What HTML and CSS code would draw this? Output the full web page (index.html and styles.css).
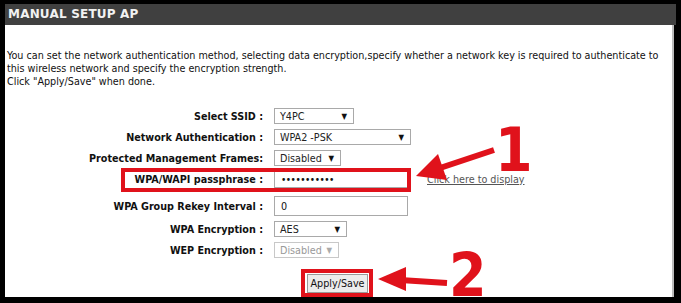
FILE: index.html
```html
<!DOCTYPE html>
<html lang="en">
<head>
  <meta charset="UTF-8" />
  <title>Manual Setup AP</title>
  <link rel="stylesheet" href="styles.css">
</head>
<body>
  <div class="frame">
    <div class="header">MANUAL SETUP AP</div>
    <div class="content">
      <p class="intro">You can set the network authentication method, selecting data encryption,specify whether a network key is required to authenticate to this wireless network and specify the encryption strength.<br>Click "Apply/Save" when done.</p>

      <div class="form">
        <div class="row">
          <label>Select SSID :</label>
          <div class="select w-ssid"><span>Y4PC</span><span class="caret">&#9660;</span></div>
        </div>
        <div class="row">
          <label>Network Authentication :</label>
          <div class="select w-auth"><span>WPA2 -PSK</span><span class="caret">&#9660;</span></div>
        </div>
        <div class="row">
          <label>Protected Management Frames:</label>
          <div class="select w-pmf"><span>Disabled</span><span class="caret">&#9660;</span></div>
        </div>
        <div class="row">
          <label>WPA/WAPI passphrase :</label>
          <div class="input pass">&#8226;&#8226;&#8226;&#8226;&#8226;&#8226;&#8226;&#8226;&#8226;&#8226;&#8226;</div>
          <a class="reveal" href="#">Click here to display</a>
        </div>
        <div class="row rekey">
          <label>WPA Group Rekey Interval :</label>
          <div class="input tall">0</div>
        </div>
        <div class="row">
          <label>WPA Encryption :</label>
          <div class="select w-enc"><span>AES</span><span class="caret">&#9660;</span></div>
        </div>
        <div class="row">
          <label>WEP Encryption :</label>
          <div class="select w-wep disabled"><span>Disabled</span><span class="caret">&#9660;</span></div>
        </div>
        <div class="actions">
          <button>Apply/Save</button>
        </div>
      </div>
    </div>

    <!-- annotations drawn over the screenshot -->
    <svg class="marks" width="681" height="303" viewBox="0 0 681 303">
      <rect x="123" y="170" width="286" height="20" fill="none" stroke="#e0121b" stroke-width="4"/>
      <rect x="303" y="271" width="68" height="24" fill="none" stroke="#e0121b" stroke-width="4"/>
      <path d="M494 150 L440 168" stroke="#e0121b" stroke-width="6" fill="none"/>
      <path d="M416 176 L438 154 L447 180 Z" fill="#e0121b"/>
      <path d="M447 283 L400 280" stroke="#e0121b" stroke-width="6" fill="none"/>
      <path d="M378 279 L406 267 L406 291 Z" fill="#e0121b"/>
      <text x="495" y="171" class="num">1</text>
      <text x="449" y="296" class="num">2</text>
    </svg>
  </div>
</body>
</html>
```

FILE: styles.css
```css
* {
  box-sizing: border-box;
}
html, body {
  margin: 0;
  padding: 0;
  background: #000;
  width: 681px;
  height: 303px;
  overflow: hidden;
}
.frame {
  position: relative;
  padding: 4px 5px 6px 5px;
  height: 303px;
  display: flex;
  flex-direction: column;
}
.header {
  height: 21px;
  width: 671px;
  background: #404040;
  color: #f2f2f2;
  font-family: 'DejaVu Sans', sans-serif;
  font-weight: bold;
  font-size: 12px;
  line-height: 21px;
  padding-left: 3px;
  letter-spacing: 0.2px;
}
.content {
  flex: 1;
  width: 669px;
  background: #fff;
  border-right: 2px solid #bbb;
  font-family: 'DejaVu Sans Condensed', 'DejaVu Sans', sans-serif;
  font-size: 10.7px;
  color: #000;
}
.intro {
  margin: 0;
  padding: 24px 0 0 2px;
  line-height: 13px;
  color: #111;
}
.form {
  margin-top: 20px;
  display: flex;
  flex-direction: column;
  gap: 5px;
}
.row {
  display: flex;
  align-items: center;
  gap: 11px;
}
.row label {
  width: 258px;
  text-align: right;
  font-weight: bold;
  color: #111;
}
.rekey {
  margin-top: 3px;
}
.select {
  height: 16px;
  border: 1px solid #a9a9a9;
  display: flex;
  align-items: center;
  justify-content: space-between;
  padding: 0 6px 0 5px;
  color: #222;
}
.select .caret {
  font-size: 8px;
  color: #111;
}
.select.disabled {
  color: #999;
  border-color: #c8c8c8;
}
.select.disabled .caret {
  color: #aaa;
}
.w-ssid { width: 80px; }
.w-auth { width: 137px; }
.w-pmf { width: 67px; }
.w-enc { width: 73px; }
.w-wep { width: 65px; }
.input {
  width: 134px;
  height: 17px;
  border: 1px solid #a9a9a9;
  padding: 0 6px;
  display: flex;
  align-items: center;
  color: #111;
}
.input.pass {
  font-size: 10px;
  letter-spacing: -0.5px;
}
.input.tall {
  height: 20px;
}
.reveal {
  margin-left: 8px;
  color: #555;
}
.actions {
  margin-top: 11px;
  padding-left: 302px;
}
.actions button {
  font-family: 'DejaVu Sans Condensed', 'DejaVu Sans', sans-serif;
  font-size: 10.7px;
  height: 19px;
  width: 61px;
  padding: 0;
  background: #ececec;
  border: 1px solid #999;
  color: #111;
}
.marks {
  position: absolute;
  left: 0;
  top: 0;
}
.num {
  font-family: 'DejaVu Sans Condensed', 'DejaVu Sans', sans-serif;
  font-weight: bold;
  font-size: 60px;
  fill: #e0121b;
}
```
